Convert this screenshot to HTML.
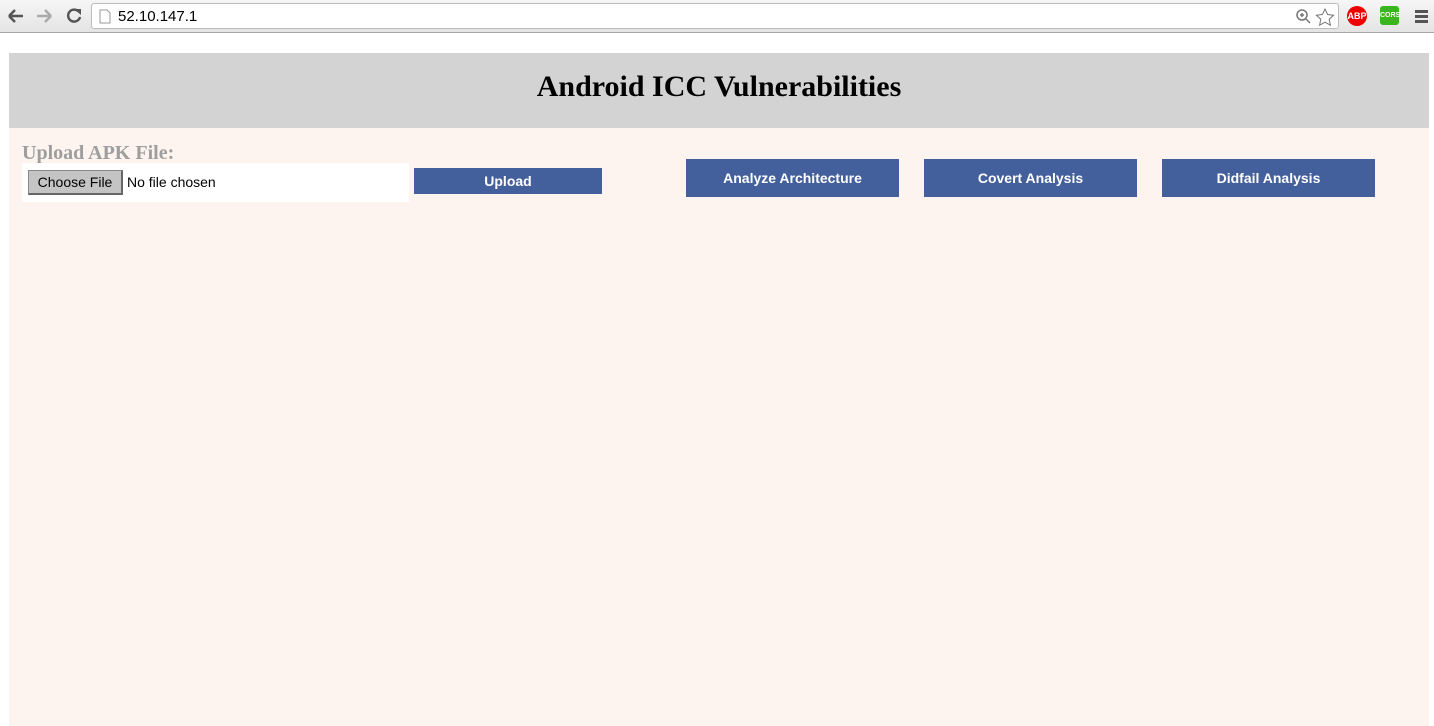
<!DOCTYPE html>
<html><head><style>
*{margin:0;padding:0;box-sizing:border-box}
body{width:1434px;height:726px;background:#fff;position:relative;overflow:hidden;font-family:"Liberation Sans",sans-serif}
.bar{position:absolute;left:0;top:0;width:1434px;height:33px;background:linear-gradient(#f6f6f6,#e4e4e4);border-bottom:1px solid #a8a8a8}
.url{position:absolute;left:91px;top:3px;width:1248px;height:26px;background:#fff;border:1px solid #bdbdbd;border-radius:3px}
.url span{position:absolute;left:26px;top:4px;font-size:15px;color:#000}
.abs{position:absolute}
.page{position:absolute;left:9px;top:53px;width:1420px;height:673px;background:#fef4ef}
.hdr{position:absolute;left:0;top:0;width:1420px;height:75px;background:#d3d3d3;text-align:center;font:bold 30px "Liberation Serif",serif;line-height:68px}
.lbl{position:absolute;left:13px;top:89px;font:bold 20px "Liberation Serif",serif;color:#9e9e9e}
.file{position:absolute;left:13px;top:110px;width:387px;height:39px;background:#fff}
.cf{position:absolute;left:6px;top:7px;width:95px;height:25px;background:#c4c4c4;border:1px solid #888;border-right:2px solid #666;border-bottom:2px solid #666;font-size:14px;line-height:22px;text-align:center}
.nf{position:absolute;left:105px;top:11px;font-size:14px}
.btn{position:absolute;background:#44609c;color:#fff;font-size:14px;font-weight:bold;text-align:center}
</style></head><body>
<div class="bar">
<svg class="abs" style="left:7px;top:8px" width="80" height="18"><path d="M2 8h14M2 8l6-6M2 8l6 6" stroke="#555" stroke-width="2.5" fill="none"/><path d="M30 8h14M44 8l-6-6M44 8l-6 6" stroke="#aaa" stroke-width="2.5" fill="none"/><path d="M71 3a6 6 0 1 0 2 6" stroke="#555" stroke-width="2.5" fill="none"/><path d="M67 1h7v6z" fill="#555"/></svg>
<div class="url"><svg class="abs" style="left:7px;top:5px" width="12" height="15"><path d="M1 1h7l3 3v10H1z" fill="#fff" stroke="#999"/></svg><span>52.10.147.1</span>
<svg class="abs" style="left:1203px;top:4px" width="40" height="18"><circle cx="7" cy="7" r="5" stroke="#777" stroke-width="1.5" fill="none"/><path d="M11 11l4 4M5 7h4M7 5v4" stroke="#777" stroke-width="1.5"/><path d="M30 1l2.6 5.5 6 .7-4.4 4 1.2 6-5.4-3-5.4 3 1.2-6-4.4-4 6-.7z" fill="none" stroke="#777"/></svg></div>
<div class="abs" style="left:1347px;top:6px;width:20px;height:20px;border-radius:50%;background:#e00;color:#fff;font-size:9px;font-weight:bold;line-height:20px;text-align:center">ABP</div>
<div class="abs" style="left:1380px;top:6px;width:19px;height:19px;border-radius:3px;background:#3bb51c;color:#fff;font-size:7px;font-weight:bold;line-height:19px;text-align:center">CORS</div>
<div class="abs" style="left:1415px;top:10px;width:13px;height:3px;background:#555;box-shadow:0 5px 0 #555,0 10px 0 #555"></div>
</div>
<div class="page">
<div class="hdr">Android ICC Vulnerabilities</div>
<div class="lbl">Upload APK File:</div>
<div class="file"><div class="cf">Choose File</div><div class="nf">No file chosen</div></div>
<div class="btn" style="left:405px;top:115px;width:188px;height:26px;line-height:26px">Upload</div>
<div class="btn" style="left:677px;top:106px;width:213px;height:38px;line-height:38px">Analyze Architecture</div>
<div class="btn" style="left:915px;top:106px;width:213px;height:38px;line-height:38px">Covert Analysis</div>
<div class="btn" style="left:1153px;top:106px;width:213px;height:38px;line-height:38px">Didfail Analysis</div>
</div>
</body></html>
